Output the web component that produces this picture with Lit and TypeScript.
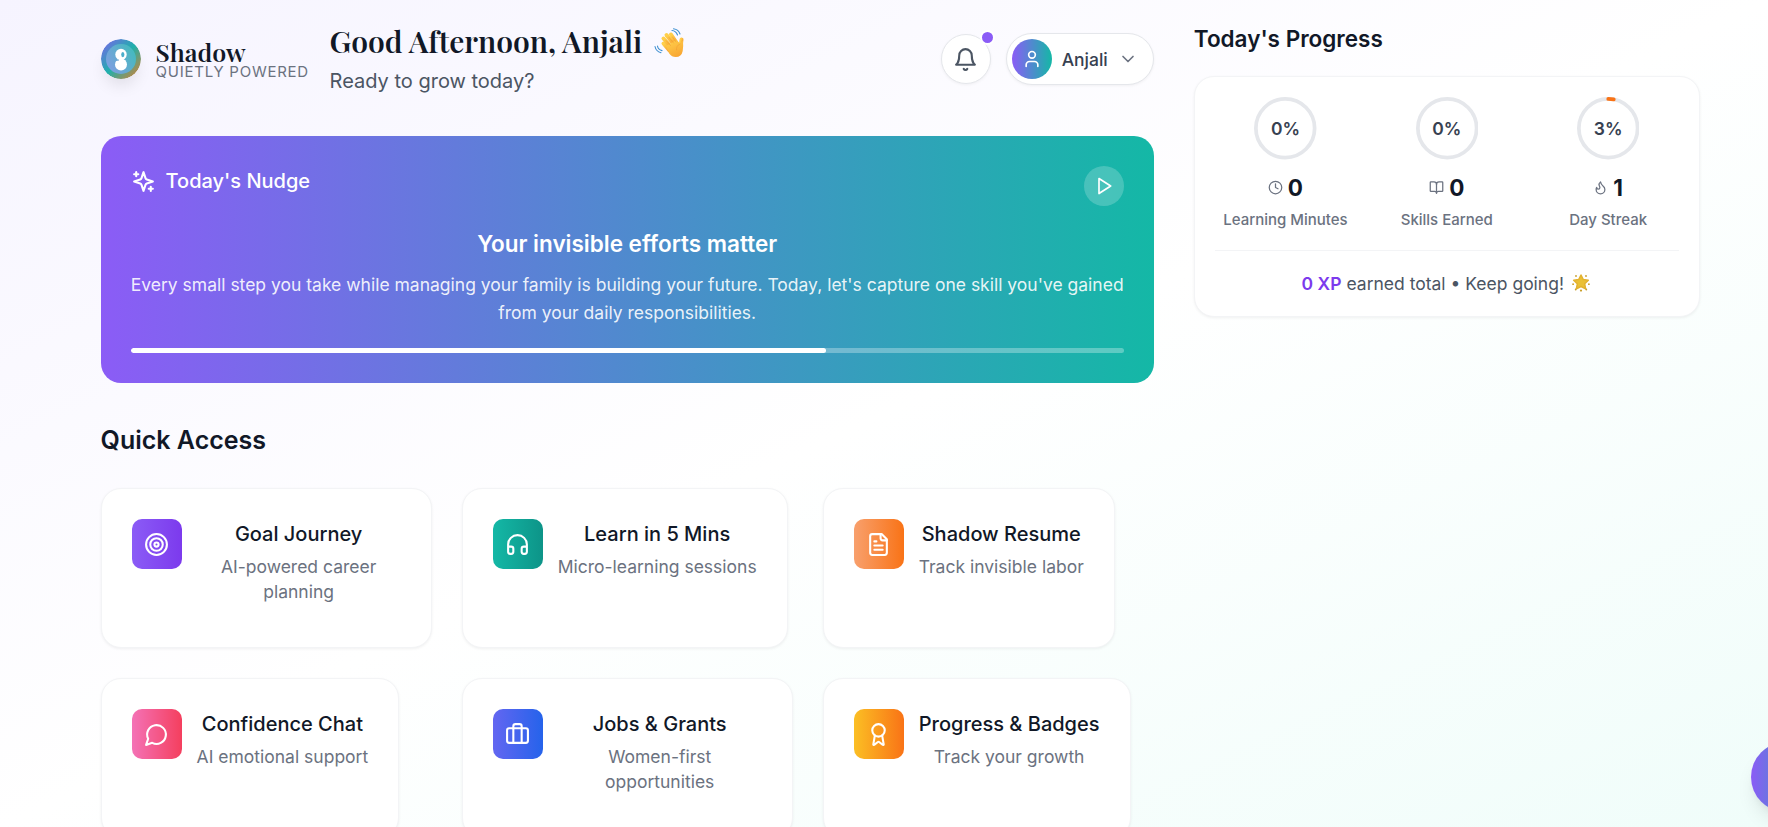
import { LitElement, html, css, svg } from 'lit';
import { customElement } from 'lit/decorators.js';

const icons = {
  bell: svg`<path d="M6 8a6 6 0 0 1 12 0c0 7 3 9 3 9H3s3-2 3-9"/><path d="M10.3 21a1.94 1.94 0 0 0 3.4 0"/>`,
  user: svg`<path d="M19 21v-2a4 4 0 0 0-4-4H9a4 4 0 0 0-4 4v2"/><circle cx="12" cy="7" r="4"/>`,
  chevron: svg`<path d="m6 9 6 6 6-6"/>`,
  sparkles: svg`<path d="m12 3-1.912 5.813a2 2 0 0 1-1.275 1.275L3 12l5.813 1.912a2 2 0 0 1 1.275 1.275L12 21l1.912-5.813a2 2 0 0 1 1.275-1.275L21 12l-5.813-1.912a2 2 0 0 1-1.275-1.275L12 3Z"/><path d="M5 3v4"/><path d="M19 17v4"/><path d="M3 5h4"/><path d="M17 19h4"/>`,
  play: svg`<polygon points="6 3 20 12 6 21 6 3"/>`,
  target: svg`<circle cx="12" cy="12" r="10"/><circle cx="12" cy="12" r="6"/><circle cx="12" cy="12" r="2"/>`,
  headphones: svg`<path d="M3 14h3a2 2 0 0 1 2 2v3a2 2 0 0 1-2 2H5a2 2 0 0 1-2-2v-7a9 9 0 0 1 18 0v7a2 2 0 0 1-2 2h-1a2 2 0 0 1-2-2v-3a2 2 0 0 1 2-2h3"/>`,
  file: svg`<path d="M15 2H6a2 2 0 0 0-2 2v16a2 2 0 0 0 2 2h12a2 2 0 0 0 2-2V7Z"/><path d="M14 2v4a2 2 0 0 0 2 2h4"/><path d="M10 9H8"/><path d="M16 13H8"/><path d="M16 17H8"/>`,
  message: svg`<path d="M7.9 20A9 9 0 1 0 4 16.1L2 22Z"/>`,
  briefcase: svg`<path d="M16 20V4a2 2 0 0 0-2-2h-4a2 2 0 0 0-2 2v16"/><rect width="20" height="14" x="2" y="6" rx="2"/>`,
  award: svg`<path d="m15.477 12.89 1.515 8.526a.5.5 0 0 1-.81.47l-3.58-2.687a1 1 0 0 0-1.197 0l-3.586 2.686a.5.5 0 0 1-.81-.469l1.514-8.526"/><circle cx="12" cy="8" r="6"/>`,
  clock: svg`<circle cx="12" cy="12" r="10"/><polyline points="12 6 12 12 16 14"/>`,
  book: svg`<path d="M12 7v14"/><path d="M3 18a1 1 0 0 1-1-1V4a1 1 0 0 1 1-1h5a4 4 0 0 1 4 4 4 4 0 0 1 4-4h5a1 1 0 0 1 1 1v13a1 1 0 0 1-1 1h-6a3 3 0 0 0-3 3 3 3 0 0 0-3-3z"/>`,
  flame: svg`<path d="M8.5 14.5A2.5 2.5 0 0 0 11 12c0-1.38-.5-2-1-3-1.072-2.143-.224-4.054 2-6 .5 2.5 2 4.9 4 6.5 2 1.6 3 3.5 3 5.5a7 7 0 1 1-14 0c0-1.153.433-2.294 1-3a2.5 2.5 0 0 0 2.5 2.5z"/>`,
};

const icon = (name: keyof typeof icons, size: number) => html`
  <svg class="icon" width=${size} height=${size} viewBox="0 0 24 24">${icons[name]}</svg>
`;

const shortcuts = [
  { icon: 'target', tone: 'violet', title: 'Goal Journey', text: 'AI-powered career planning' },
  { icon: 'headphones', tone: 'teal', title: 'Learn in 5 Mins', text: 'Micro-learning sessions' },
  { icon: 'file', tone: 'peach', title: 'Shadow Resume', text: 'Track invisible labor' },
  { icon: 'message', tone: 'rose', title: 'Confidence Chat', text: 'AI emotional support' },
  { icon: 'briefcase', tone: 'blue', title: 'Jobs & Grants', text: 'Women-first opportunities' },
  { icon: 'award', tone: 'amber', title: 'Progress & Badges', text: 'Track your growth' },
] as const;

const stats = [
  { icon: 'clock', percent: 0, value: 0, label: 'Learning Minutes' },
  { icon: 'book', percent: 0, value: 0, label: 'Skills Earned' },
  { icon: 'flame', percent: 3, value: 1, label: 'Day Streak' },
] as const;

const base = css`
  * {
    box-sizing: border-box;
    margin: 0;
  }

  svg {
    display: block;
    flex: none;
  }

  .icon {
    fill: none;
    stroke: currentColor;
    stroke-width: 2;
    stroke-linecap: round;
    stroke-linejoin: round;
  }
`;

@customElement('app-header')
export class AppHeader extends LitElement {

  static styles = [
    base,
    css`
      :host {
        display: flex;
        align-items: center;
        height: 74px;
      }

      .logo {
        border-radius: 50%;
        box-shadow: 0 10px 16px -4px rgb(0 0 0 / 10%);
      }

      .brand {
        width: 159px;
        margin-left: 15px;
        margin-right: 15px;
        white-space: nowrap;
      }

      .name {
        font: 600 25px/25px "Playfair Display", "Liberation Serif", serif;
        color: #111827;
      }

      .tagline {
        font-size: 15px;
        line-height: 15px;
        letter-spacing: 0.75px;
        color: #6b7280;
      }

      .greeting {
        flex: 1;
      }

      h1 {
        display: flex;
        align-items: center;
        gap: 12px;
        height: 38px;
        margin-bottom: 6px;
        font: 600 30px/38px "Playfair Display", "Liberation Serif", serif;
        color: #111827;
        white-space: nowrap;
      }

      .wave {
        margin-top: 3px;
      }

      .sub {
        font-size: 20px;
        line-height: 30px;
        color: #4b5563;
      }

      .bell {
        position: relative;
        display: grid;
        place-items: center;
        width: 50px;
        height: 50px;
        margin-right: 15px;
        border: 1px solid #e5e7eb;
        border-radius: 50%;
        background: #fff;
        color: #4b5563;
        box-shadow: 0 1px 3px rgb(0 0 0 / 5%);
      }

      .badge {
        position: absolute;
        top: -5px;
        right: -5px;
        width: 15px;
        height: 15px;
        border: 2px solid #fff;
        border-radius: 50%;
        background: #8b5cf6;
      }

      .account {
        display: flex;
        align-items: center;
        gap: 10px;
        padding: 5px 15px 5px 5px;
        border: 1px solid #e5e7eb;
        border-radius: 26px;
        background: #fff;
        font-size: 17.5px;
        font-weight: 500;
        color: #374151;
        box-shadow: 0 1px 3px rgb(0 0 0 / 5%);
      }

      .avatar {
        display: grid;
        place-items: center;
        width: 40px;
        height: 40px;
        border-radius: 50%;
        background: linear-gradient(to right, #8b5cf6, #14b8a6);
        color: #fff;
      }

      .chevron {
        color: #6b7280;
      }
    `,
  ];

  render() {
    return html`
      <svg class="logo" width="40" height="40" viewBox="0 0 40 40">
        <defs>
          <linearGradient id="ring" x1="0" y1="0" x2="1" y2="1">
            <stop offset="0.05" stop-color="#7668e8"/>
            <stop offset="0.5" stop-color="#1fb0ac"/>
            <stop offset="0.95" stop-color="#cf8236"/>
          </linearGradient>
          <linearGradient id="disc" x1="0.1" y1="0.8" x2="0.9" y2="0.3">
            <stop offset="0" stop-color="#7c9fe0"/>
            <stop offset="1" stop-color="#48b8c0"/>
          </linearGradient>
        </defs>
        <circle cx="20" cy="20" r="20" fill="url(#ring)"/>
        <circle cx="20" cy="20" r="15" fill="url(#disc)"/>
        <circle cx="20" cy="15.5" r="5.7" fill="#fff"/>
        <circle cx="20" cy="25.5" r="6" fill="#fff"/>
        <ellipse cx="21.8" cy="15.6" rx="1.6" ry="2.6" fill="#4aaecb"/>
        <path d="M14 21.2l2.4.3 1.6-.6" stroke="#6aa6d6" fill="none"/>
      </svg>
      <div class="brand">
        <div class="name">Shadow</div>
        <div class="tagline">QUIETLY POWERED</div>
      </div>
      <div class="greeting">
        <h1>
          Good Afternoon, Anjali
          <svg class="wave" width="30" height="30" viewBox="0 0 30 30">
            <defs>
              <linearGradient id="hand" x1="0.2" y1="0" x2="0.7" y2="1">
                <stop offset="0" stop-color="#ffcf4a"/>
                <stop offset="1" stop-color="#f8a533"/>
              </linearGradient>
            </defs>
            <g stroke="url(#hand)" stroke-width="4" stroke-linecap="round" fill="none">
              <path d="M9.5 15.5l6 7"/>
              <path d="M9.5 10.5l8 9"/>
              <path d="M12.5 7l8 10"/>
              <path d="M17 6.5l6 9"/>
              <path d="M27.5 11.5l-1 7"/>
            </g>
            <path d="M12 18L22.5 12q2 2 3.5 4L29 12.5q.5 6-.3 10.5-1.2 6-7 6-4 0-6.5-3.5z" fill="url(#hand)"/>
            <path d="M12 12.5l4.5 5M15 9.5l4.500 5.500M18.5 9l3.500 5M26 16q-4 1.500-3.500 6" stroke="#f0a236" stroke-width=".7" fill="none" stroke-linecap="round"/>
            <path d="M18 2.500q4 .3 5.500 4.500M19.5 .8q5 .7 6.500 5.200M3.500 18q.4 3.500 4.500 4.600M1 18.500q1 5 6 6.200" stroke="#3c8fd0" stroke-width="1.1" fill="none" stroke-linecap="round"/>
          </svg>
        </h1>
        <p class="sub">Ready to grow today?</p>
      </div>
      <div class="bell">
        ${icon('bell', 25)}
        <span class="badge"></span>
      </div>
      <div class="account">
        <span class="avatar">${icon('user', 20)}</span>
        Anjali
        <span class="chevron">${icon('chevron', 20)}</span>
      </div>
    `;
  }
}

@customElement('daily-nudge')
export class DailyNudge extends LitElement {

  static styles = [
    base,
    css`
      :host {
        display: block;
        box-sizing: border-box;
        height: 247px;
        padding: 30px;
        border-radius: 20px;
        background: linear-gradient(to right, #8b5cf6, #14b8a6);
        color: #fff;
        text-align: center;
      }

      .top {
        display: flex;
        align-items: flex-start;
        justify-content: space-between;
        margin-bottom: 20px;
      }

      .label {
        display: flex;
        align-items: center;
        gap: 10px;
        font-size: 20px;
        font-weight: 500;
        line-height: 30px;
      }

      .play {
        display: grid;
        place-items: center;
        width: 40px;
        height: 40px;
        border-radius: 50%;
        background: rgb(255 255 255 / 20%);
      }

      h2 {
        margin-bottom: 10px;
        font-size: 22.5px;
        font-weight: 600;
        line-height: 35px;
      }

      .message {
        margin-bottom: 20px;
        font-size: 17.5px;
        line-height: 28.44px;
        color: rgb(255 255 255 / 90%);
      }

      .track {
        height: 5px;
        border-radius: 3px;
        background: rgb(255 255 255 / 30%);
        overflow: hidden;
      }

      .fill {
        height: 100%;
        border-radius: 3px;
        background: #fff;
      }
    `,
  ];

  render() {
    const progress = 70;

    return html`
      <div class="top">
        <div class="label">${icon('sparkles', 25)} Today's Nudge</div>
        <div class="play">${icon('play', 20)}</div>
      </div>
      <h2>Your invisible efforts matter</h2>
      <p class="message">
        Every small step you take while managing your family is building your future.
        Today, let's capture one skill you've gained from your daily responsibilities.
      </p>
      <div class="track"><div class="fill" style="width: ${progress}%"></div></div>
    `;
  }
}

@customElement('quick-access')
export class QuickAccess extends LitElement {

  static styles = [
    base,
    css`
      :host {
        display: block;
      }

      h2 {
        margin-bottom: 30px;
        font-size: 25px;
        font-weight: 600;
        line-height: 35px;
        color: #111827;
      }

      .grid {
        display: grid;
        grid-template-columns: repeat(3, minmax(0, 1fr));
        grid-auto-rows: 160px;
        gap: 30px;
      }

      .card {
        display: flex;
        align-items: flex-start;
        gap: 15px;
        justify-self: start;
        max-width: 100%;
        padding: 30px;
        border: 1px solid #f3f4f6;
        border-radius: 20px;
        background: #fff;
        box-shadow: 0 1px 3px rgb(0 0 0 / 6%);
      }

      .tile {
        display: grid;
        place-items: center;
        flex: none;
        width: 50px;
        height: 50px;
        border-radius: 10px;
        color: #fff;
      }

      .violet { background: linear-gradient(to right, #8b5cf6, #7c3aed); }
      .teal { background: linear-gradient(to right, #14b8a6, #0d9488); }
      .peach { background: linear-gradient(to right, #f8a06d, #f97316); }
      .rose { background: linear-gradient(to right, #f472b6, #f43f5e); }
      .blue { background: linear-gradient(to right, #6366f1, #2563eb); }
      .amber { background: linear-gradient(to right, #fbbf24, #f97316); }

      .body {
        flex: 1;
        text-align: center;
      }

      h3 {
        margin-bottom: 5px;
        font-size: 20px;
        font-weight: 500;
        line-height: 30px;
        color: #111827;
      }

      p {
        font-size: 17.5px;
        line-height: 25px;
        color: #6b7280;
      }
    `,
  ];

  render() {
    return html`
      <h2>Quick Access</h2>
      <div class="grid">
        ${shortcuts.map((item) => html`
          <div class="card">
            <div class="tile ${item.tone}">${icon(item.icon, 25)}</div>
            <div class="body">
              <h3>${item.title}</h3>
              <p>${item.text}</p>
            </div>
          </div>
        `)}
      </div>
    `;
  }
}

@customElement('progress-panel')
export class ProgressPanel extends LitElement {

  static styles = [
    base,
    css`
      :host {
        display: block;
      }

      h2 {
        margin-bottom: 20px;
        font-size: 22.5px;
        font-weight: 600;
        line-height: 35px;
        color: #111827;
      }

      .panel {
        height: 241px;
        padding: 20px;
        border: 1px solid #f3f4f6;
        border-radius: 20px;
        background: #fff;
        box-shadow: 0 1px 3px rgb(0 0 0 / 6%);
      }

      .stats {
        display: grid;
        grid-template-columns: repeat(3, 1fr);
        gap: 20px;
        padding-bottom: 20px;
        border-bottom: 1px solid #f3f4f6;
      }

      .stat {
        display: flex;
        flex-direction: column;
        align-items: center;
      }

      .ring {
        display: grid;
        place-items: center;
        margin-bottom: 10px;
        font-size: 17.5px;
        font-weight: 600;
        color: #374151;
      }

      .ring > * {
        grid-area: 1 / 1;
      }

      .rail,
      .arc {
        fill: none;
        stroke: #e5e7eb;
        stroke-width: 3.75;
      }

      .arc {
        stroke: #f97316;
        stroke-linecap: round;
      }

      .value {
        display: flex;
        align-items: center;
        gap: 5px;
        margin-bottom: 5px;
        font-size: 22.5px;
        font-weight: 700;
        line-height: 35px;
        color: #111827;
      }

      .value .icon {
        color: #6b7280;
      }

      .caption {
        font-size: 15px;
        font-weight: 500;
        line-height: 20px;
        color: #6b7280;
      }

      .total {
        display: flex;
        align-items: center;
        justify-content: center;
        gap: 5px;
        padding-top: 20px;
        font-size: 17.5px;
        line-height: 25px;
        color: #4b5563;
      }

      .xp {
        font-weight: 600;
        color: #7c3aed;
      }

      .star {
        margin-left: 3px;
        margin-right: 2px;
      }
    `,
  ];

  renderArc(percent: number, radius: number) {
    const length = 2 * Math.PI * radius;
    return svg`
      <circle class="arc" cx="31.25" cy="31.25" r=${radius}
        stroke-dasharray="${length * percent / 100} ${length}" transform="rotate(-90 31.25 31.25)"/>
    `;
  }

  render() {
    const radius = 29.375;

    return html`
      <h2>Today's Progress</h2>
      <div class="panel">
        <div class="stats">
          ${stats.map((item) => html`
            <div class="stat">
              <div class="ring">
                <svg width="62.5" height="62.5" viewBox="0 0 62.5 62.5">
                  <circle class="rail" cx="31.25" cy="31.25" r=${radius}/>
                  ${item.percent ? this.renderArc(item.percent, radius) : ''}
                </svg>
                <span>${item.percent}%</span>
              </div>
              <div class="value">${icon(item.icon, 15)} ${item.value}</div>
              <div class="caption">${item.label}</div>
            </div>
          `)}
        </div>
        <div class="total">
          <span class="xp">0 XP</span>
          <span>earned total • Keep going!</span>
          <svg class="star" width="18" height="18" viewBox="0 0 18 18">
            <path d="M9 1l2.300 4.500 5 .7-3.600 3.600.9 5-4.600-2.300-4.600 2.300.9-5L1.700 6.200l5-.7z"
              fill="#eac035" stroke="#e3b22f" stroke-width="1.5" stroke-linejoin="round"/>
            <g fill="#c99f2a">
              <circle cx="1.1" cy="10.200" r=".9"/><circle cx="16.900" cy="10.200" r=".9"/>
              <circle cx="3.700" cy="15.500" r=".9"/><circle cx="14.300" cy="15.500" r=".9"/>
              <circle cx="4" cy="2" r=".9"/><circle cx="14" cy="2" r=".9"/>
              <circle cx="9" cy="16.600" r="1.1"/>
            </g>
          </svg>
        </div>
      </div>
    `;
  }
}

@customElement('app-root')
export class AppRoot extends LitElement {

  static styles = [
    base,
    css`
      :host {
        position: relative;
        display: grid;
        grid-template-columns: 1053.2px 506px;
        gap: 40px;
        align-items: start;
        box-sizing: border-box;
        height: 100vh;
        padding-left: 100.6px;
        overflow: hidden;
        background: linear-gradient(to bottom right, #f6f4ff, #fff, #f0fdfa);
        font-family: Inter, sans-serif;
      }

      .main {
        display: flex;
        flex-direction: column;
        gap: 40px;
        padding-top: 22px;
      }

      .side {
        padding-top: 21px;
      }

      .fab {
        position: absolute;
        right: -53px;
        bottom: 15px;
        width: 70px;
        height: 70px;
        border-radius: 50%;
        background: linear-gradient(to right, #8b5cf6, #14b8a6);
        box-shadow: 0 12px 19px -4px rgb(0 0 0 / 10%), 0 5px 8px -5px rgb(0 0 0 / 10%);
      }
    `,
  ];

  render() {
    return html`
      <main class="main">
        <app-header></app-header>
        <daily-nudge></daily-nudge>
        <quick-access></quick-access>
      </main>
      <aside class="side">
        <progress-panel></progress-panel>
      </aside>
      <div class="fab"></div>
    `;
  }
}
